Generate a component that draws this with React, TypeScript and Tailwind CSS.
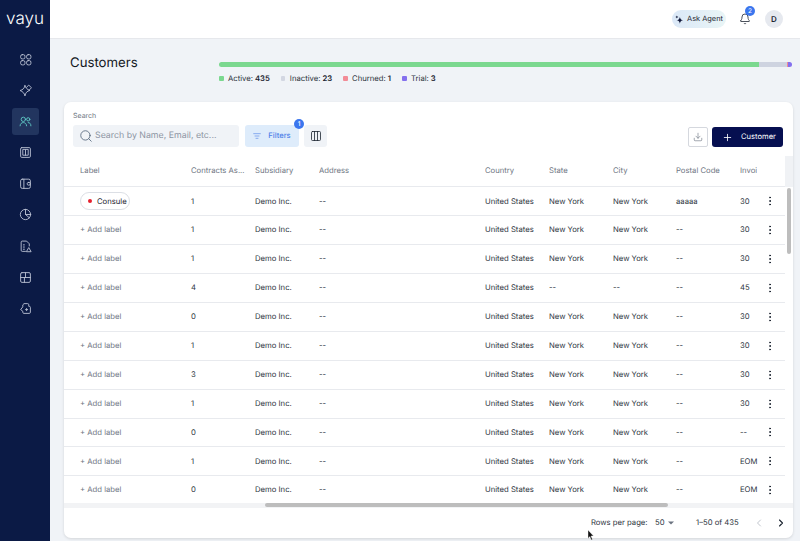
import { Bell, ChevronLeft, ChevronRight, Columns3, Download, ListFilter, MoreVertical, Plus, Search } from "lucide-react";

const rows = [
  { contracts: "1", state: "New York", city: "New York", postal: "aaaaa", invoice: "30", label: true },
  { contracts: "1", state: "New York", city: "New York", postal: "--", invoice: "30" },
  { contracts: "1", state: "New York", city: "New York", postal: "--", invoice: "30" },
  { contracts: "4", state: "--", city: "--", postal: "--", invoice: "45" },
  { contracts: "0", state: "New York", city: "New York", postal: "--", invoice: "30" },
  { contracts: "1", state: "New York", city: "New York", postal: "--", invoice: "30" },
  { contracts: "3", state: "New York", city: "New York", postal: "--", invoice: "30" },
  { contracts: "1", state: "New York", city: "New York", postal: "--", invoice: "30" },
  { contracts: "0", state: "New York", city: "New York", postal: "--", invoice: "--" },
  { contracts: "1", state: "New York", city: "New York", postal: "--", invoice: "EOM" },
  { contracts: "0", state: "New York", city: "New York", postal: "--", invoice: "EOM" },
];

function NavIcon({ children, active }: { children: React.ReactNode; active?: boolean }) {
  return (
    <div className={`w-[27px] h-[27px] rounded-[3px] flex items-center justify-center ${active ? "bg-[#22355f] text-[#5fc7c4]" : "text-[#b9c0d2]"}`}>
      <svg width="13" height="13" viewBox="0 0 24 24" fill="none" stroke="currentColor" strokeWidth="1.7" strokeLinecap="round" strokeLinejoin="round">
        {children}
      </svg>
    </div>
  );
}

function Sidebar() {
  return (
    <div className="w-[50px] shrink-0 bg-[#0b1a45] flex flex-col items-center">
      <div className="h-[39px] w-full pl-[6px] pt-[9px] text-white text-[17px] font-light leading-[20px] tracking-[0.1px]">vayu</div>
      <div className="flex flex-col items-center gap-[4.1px] mt-[7px]">
        <NavIcon>
          <rect x="3" y="3" width="8" height="8" rx="3" />
          <rect x="14" y="3" width="8" height="8" rx="3" />
          <rect x="3" y="14" width="8" height="8" rx="3" />
          <rect x="14" y="14" width="8" height="8" rx="3" />
        </NavIcon>
        <NavIcon>
          <path d="M11 3c1 4 4 7 9 9-5 1-8 4-9 10-1-5-4-8-9-10 5-1 8-4 9-9z" />
          <path d="M14 6l4-4 5 5-4 4" />
        </NavIcon>
        <NavIcon active>
          <circle cx="8" cy="8" r="4" />
          <path d="M2 20c0-4 3-6 6-6s6 2 6 6" />
          <circle cx="17" cy="8" r="3" />
          <path d="M17 14c3 0 5 2 5 6" />
        </NavIcon>
        <NavIcon>
          <rect x="3" y="3" width="18" height="18" rx="2" />
          <path d="M7 7v10h10V7zM12 7v10" />
        </NavIcon>
        <NavIcon>
          <rect x="3" y="4" width="18" height="17" rx="3" />
          <path d="M9 4v17" />
          <rect x="15" y="10" width="6" height="5" rx="2.5" />
        </NavIcon>
        <NavIcon>
          <circle cx="12" cy="12" r="9.5" />
          <path d="M12 2.5V12l7 6M12 12h9.5" />
        </NavIcon>
        <NavIcon>
          <path d="M12 21H6a2 2 0 0 1-2-2V4a2 2 0 0 1 2-2h8l5 5v4" />
          <path d="M8 9h2M8 13h2M8 17h2" />
          <path d="M14 21l4-7 4 7z" />
        </NavIcon>
        <NavIcon>
          <rect x="3" y="3" width="18" height="18" rx="2.5" />
          <path d="M3 12h18M12 3v9M10 12v9" />
        </NavIcon>
        <NavIcon>
          <path d="M10 3h6a2 2 0 0 1 2 2v3h1a2 2 0 0 1 2 2v9a2 2 0 0 1-2 2H9a2 2 0 0 1-2-2v-2l-4-3 4-5V6z" />
          <path d="M14 12v4M12 14h4" />
        </NavIcon>
      </div>
    </div>
  );
}

function TopBar() {
  return (
    <div className="h-[39px] shrink-0 bg-white border-b border-[#e6e8ec] flex items-center justify-end pr-[17px]">
      <div className="h-[18px] w-[54px] rounded-full bg-gradient-to-r from-[#dbe8f7] to-[#e9f5f6] flex items-center justify-center gap-[3px] text-[7.4px] text-[#1c2430]">
        <svg width="9" height="9" viewBox="0 0 24 24" fill="#10183a">
          <path d="M13 5c1 5 3 8 9 9-6 1-8 3-9 9-1-6-3-8-9-9 6-1 8-4 9-9z" />
          <path d="M5 1c.5 2.500 1.500 3.500 4 4-2.500.5-3.500 1.500-4 4-.5-2.500-1.500-3.500-4-4 2.500-.5 3.500-1.500 4-4z" />
        </svg>
        Ask Agent
      </div>
      <div className="relative ml-[10px] mr-[11px] w-[18px] flex justify-center">
        <Bell size={12} strokeWidth={1.6} className="text-[#1f2733]" />
        <span className="absolute -top-[7px] left-[9px] w-[10px] h-[10px] rounded-full bg-[#3b76ee] text-white text-[6.5px] leading-[10px] text-center">2</span>
      </div>
      <div className="w-[18px] h-[18px] rounded-full bg-[#e6e9ef] flex items-center justify-center text-[8px] font-semibold text-[#1c2430]">D</div>
    </div>
  );
}

function Legend({ color, label, value }: { color: string; label: string; value: string }) {
  return (
    <div className="flex items-center text-[7.7px] text-[#2c3440]">
      <span className={`w-[4.500px] h-[4.500px] rounded-[1px] mr-[4.500px] ${color}`} />
      {label}: <span className="font-semibold ml-[2px] text-[#1c2430]">{value}</span>
    </div>
  );
}

function Summary() {
  return (
    <div className="h-[63px] shrink-0 flex pl-[20px] pr-[8px]">
      <div className="w-[149px] pt-[15px] text-[13.2px] leading-[18px] text-[#14181f]">Customers</div>
      <div className="flex-1 pt-[23px]">
        <div className="h-[5px] flex rounded-full overflow-hidden">
          <div className="w-[540px] bg-[#7bd88f]" />
          <div className="w-[28px] bg-[#ced3e0]" />
          <div className="w-[1px] bg-[#f28b96]" />
          <div className="flex-1 bg-[#8470ee]" />
        </div>
        <div className="flex gap-[11px] mt-[6px] leading-[11px]">
          <Legend color="bg-[#7bd88f]" label="Active" value="435" />
          <Legend color="bg-[#d3d7e2]" label="Inactive" value="23" />
          <Legend color="bg-[#f28b96]" label="Churned" value="1" />
          <Legend color="bg-[#8470ee]" label="Trial" value="3" />
        </div>
      </div>
    </div>
  );
}

function Toolbar() {
  return (
    <div className="h-[54px] shrink-0 px-[9px] pt-[9px]">
      <div className="text-[7px] leading-[9px] text-[#6b7380]">Search</div>
      <div className="flex items-end mt-[5px] pr-[1px]">
        <div className="w-[166px] h-[22px] rounded-[3px] bg-[#f0f3f7] flex items-center pl-[6px] text-[8.8px] text-[#8d95a3]">
          <Search size={14} strokeWidth={1.5} className="text-[#5a6b80] mr-[2px]" />
          Search by Name, Email, etc...
        </div>
        <div className="relative ml-[6px] w-[54px] h-[22px] rounded-[3px] bg-[#deecfb] flex items-center justify-center gap-[4px] text-[7.600px] font-medium text-[#4d7fe8]">
          <ListFilter size={8} strokeWidth={1.8} />
          <span className="ml-[3px]">Filters</span>
          <span className="absolute -top-[6px] -right-[5px] w-[10px] h-[10px] rounded-full bg-[#3b76ee] text-white text-[6.5px] leading-[10px] text-center">1</span>
        </div>
        <div className="ml-[5px] w-[23px] h-[22px] rounded-[3px] bg-[#f0f3f7] flex items-center justify-center">
          <Columns3 size={12} strokeWidth={1.6} className="text-[#1c2430]" />
        </div>
        <div className="ml-auto w-[20px] h-[20px] rounded-[2px] border border-[#d5d8de] flex items-center justify-center">
          <Download size={10} strokeWidth={1.5} className="text-[#6b7380]" />
        </div>
        <div className="ml-[4px] w-[71px] h-[20px] rounded-[3px] bg-[#060f50] flex items-center pl-[10px] text-[7.6px] text-white">
          <Plus size={11} strokeWidth={1.8} className="mr-[8px]" />
          Customer
        </div>
      </div>
    </div>
  );
}

function HeaderCell({ w, children }: { w: string; children: React.ReactNode }) {
  return <div className={`${w} shrink-0 overflow-hidden whitespace-nowrap`}>{children}</div>;
}

function Table() {
  return (
    <div className="flex-1 min-h-0 flex flex-col overflow-hidden">
      <div className="h-[31.4px] shrink-0 flex">
        <div className="flex-1 flex items-center pl-[16px] text-[7.7px] text-[#6f7683] border-b border-[#e8eaee]">
          <HeaderCell w="w-[111px]">Label</HeaderCell>
          <HeaderCell w="w-[64px]">Contracts As...</HeaderCell>
          <HeaderCell w="w-[64px]">Subsidiary</HeaderCell>
          <HeaderCell w="w-[166px]">Address</HeaderCell>
          <HeaderCell w="w-[64px]">Country</HeaderCell>
          <HeaderCell w="w-[64px]">State</HeaderCell>
          <HeaderCell w="w-[63px]">City</HeaderCell>
          <HeaderCell w="w-[64px]">Postal Code</HeaderCell>
          <HeaderCell w="w-[17px]">Invoi</HeaderCell>
        </div>
        <div className="w-[8px] shrink-0 bg-[#f0f2f5]" />
      </div>
      <div className="relative flex-1 min-h-0 overflow-hidden flex">
        <div className="flex-1">
          {rows.map((r, i) => (
            <div key={i} className="h-[28.9px] flex items-center pl-[16px] text-[7.7px] text-[#2c3440] border-b border-[#e8eaee]">
              <div className="w-[111px] shrink-0">
                {r.label ? (
                  <span className="inline-flex items-center h-[18px] w-[50px] rounded-full border border-[#dcdfe5] pl-[7px] text-[#1c2430]">
                    <span className="w-[4px] h-[4px] rounded-full bg-[#e5202e] mr-[5px]" />
                    Consule
                  </span>
                ) : (
                  <span className="text-[#6f7683]">+ Add label</span>
                )}
              </div>
              <div className="w-[64px] shrink-0">{r.contracts}</div>
              <div className="w-[64px] shrink-0">Demo Inc.</div>
              <div className="w-[166px] shrink-0">--</div>
              <div className="w-[64px] shrink-0">United States</div>
              <div className="w-[64px] shrink-0">{r.state}</div>
              <div className="w-[63px] shrink-0">{r.city}</div>
              <div className="w-[64px] shrink-0">{r.postal}</div>
              <div className="w-[17px] shrink-0 whitespace-nowrap">{r.invoice}</div>
              <div className="flex-1 flex justify-center">
                <MoreVertical size={12} strokeWidth={2} className="text-[#1c2430] -ml-[2px]" />
              </div>
            </div>
          ))}
        </div>
        <div className="w-[8px] shrink-0 bg-white pt-[1px] flex justify-center">
          <div className="w-[3.5px] h-[66px] rounded-full bg-[#bdbdbd]" />
        </div>
        <div className="absolute bottom-0 left-0 right-0 h-[5px] bg-[#f2f3f5] pl-[201px]">
          <div className="w-[403px] h-[4px] rounded-full bg-[#bdbdbd]" />
        </div>
      </div>
    </div>
  );
}

function Footer() {
  return (
    <div className="h-[30px] shrink-0 flex items-center whitespace-nowrap text-[7.7px] text-[#2c3440] pl-[527px]">
      <span className="w-[64px]">Rows per page:</span>
      <span className="w-[12px]">50</span>
      <svg className="ml-[1px] text-[#6b7380]" width="6" height="4" viewBox="0 0 6 4">
        <path d="M0 0.500h6L3 3.500z" fill="currentColor" />
      </svg>
      <span className="ml-[22px] w-[57px]">1–50 of 435</span>
      <ChevronLeft size={12} strokeWidth={1.8} className="text-[#b9bec7]" />
      <ChevronRight size={12} strokeWidth={2.2} className="ml-[10px] text-[#1c2430]" />
    </div>
  );
}

export default function App() {
  return (
    <div className="relative w-[800px] h-[541px] flex overflow-hidden bg-[#f0f3f7] [font-family:Inter,sans-serif] [text-rendering:geometricPrecision]">
      <Sidebar />
      <div className="flex-1 min-w-0 flex flex-col">
        <TopBar />
        <Summary />
        <div className="flex-1 min-h-0 ml-[14px] mr-[7px] mb-[3px] bg-white rounded-[7px] shadow-[0_1px_3px_rgba(0,0,0,0.12)] flex flex-col overflow-hidden">
          <Toolbar />
          <Table />
          <Footer />
        </div>
      </div>
      <svg className="absolute left-[587px] top-[530px]" width="8" height="11" viewBox="0 0 8 11">
        <path d="M1 0l5.5 6H4l1.5 3.5-1.3.5L2.8 6.6 1 8.5z" fill="#111" stroke="#fff" strokeWidth="0.4" />
      </svg>
    </div>
  );
}
